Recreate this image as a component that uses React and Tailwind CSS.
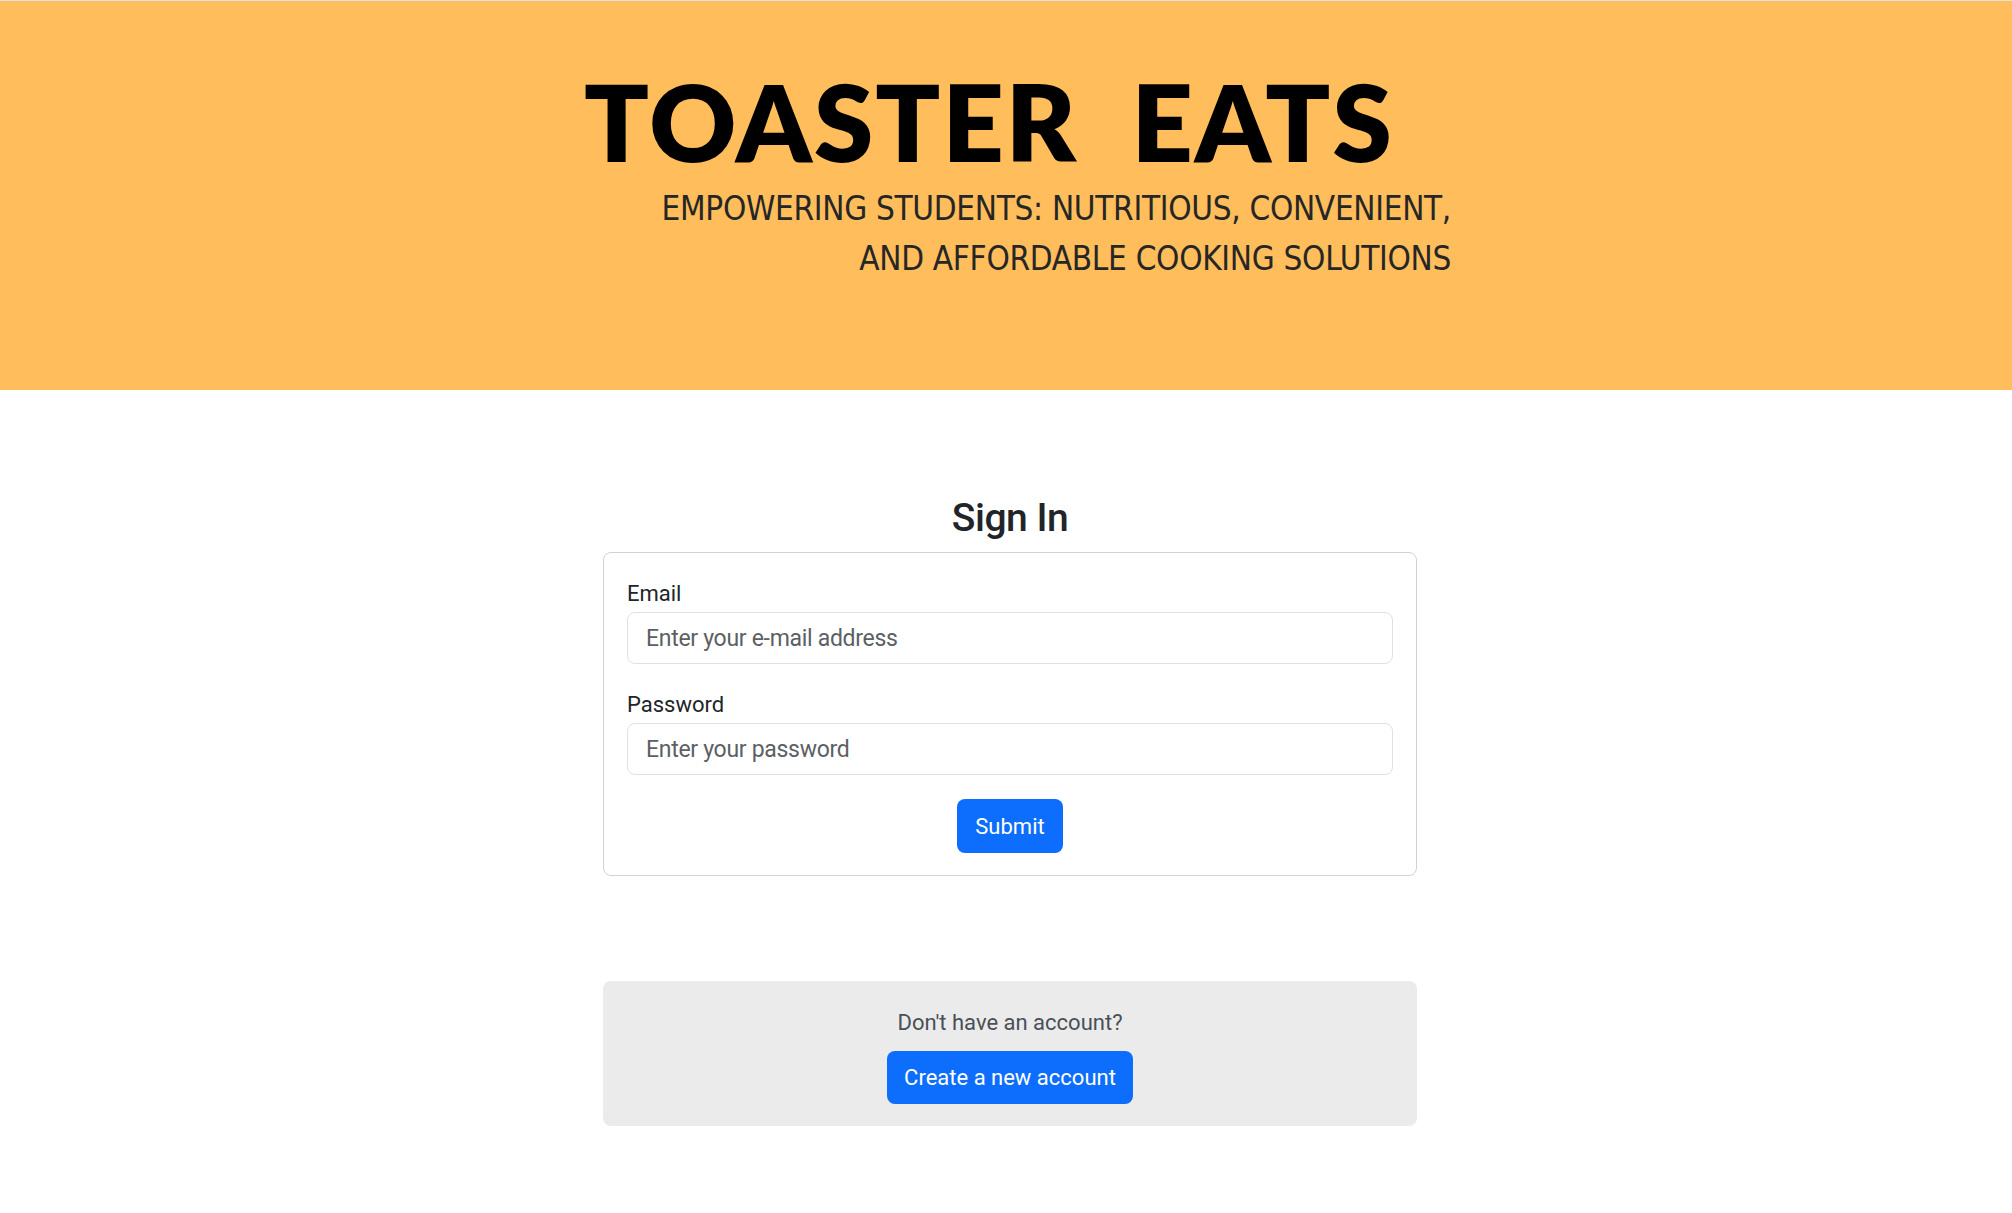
import { useState } from 'react';

const bodyFont = { fontFamily: 'Roboto, "Noto Sans", sans-serif' };

function Header() {
  return (
    <header className="border-t border-[#e2e2e2] bg-[#ffbd5b] h-[390px] pt-[66px]">
      <div className="mx-auto w-[890px]">
        <h1 className="pl-[23px] font-['Lato',sans-serif] font-extrabold text-[107px] leading-[107px] tracking-[2px] text-black whitespace-pre">
          TOASTER  EATS
        </h1>
        <p className="mt-[10px] text-right font-['Liberation_Sans_Narrow','DejaVu_Sans_Condensed',Roboto,sans-serif] text-[33px] leading-[50px] tracking-[-0.3px] text-[#262626] uppercase">
          Empowering students: nutritious, convenient,
          <br />
          and affordable cooking solutions
        </p>
      </div>
    </header>
  );
}

function Field({ label, type, placeholder, value, onChange }) {
  return (
    <div className="flex flex-col">
      <label className="text-[22px] leading-[36px] text-[#212529]">{label}</label>
      <input
        type={type}
        placeholder={placeholder}
        value={value}
        onChange={(e) => onChange(e.target.value)}
        className="h-[52px] w-full rounded-[8px] border border-[#dee2e6] bg-white px-[18px] text-[23px] tracking-[-0.3px] text-[#212529] placeholder:text-[#5c5f63] focus:outline-none"
      />
    </div>
  );
}

export default function App() {
  const [email, setEmail] = useState('');
  const [password, setPassword] = useState('');

  return (
    <div className="min-h-screen bg-white" style={bodyFont}>
      <Header />
      <main className="flex flex-col items-center pl-[8px] pt-[105px] pb-[60px]">
        <h2 className="text-[39px] leading-[47px] font-medium tracking-[-0.5px] text-[#212529] mb-[10px]">
          Sign In
        </h2>
        <form
          onSubmit={(e) => e.preventDefault()}
          className="w-[814px] rounded-[8px] border border-[#d2d2d2] px-[23px] pt-[23px] pb-[22px] flex flex-col"
        >
          <Field
            label="Email"
            type="email"
            placeholder="Enter your e-mail address"
            value={email}
            onChange={setEmail}
          />
          <div className="mt-[23px]">
            <Field
              label="Password"
              type="password"
              placeholder="Enter your password"
              value={password}
              onChange={setPassword}
            />
          </div>
          <div className="mt-[24px] flex justify-center">
            <button
              type="submit"
              className="h-[54px] rounded-[8px] bg-[#0d6efd] px-[18px] text-[22px] text-white"
            >
              Submit
            </button>
          </div>
        </form>

        <div className="mt-[105px] w-[814px] rounded-[8px] bg-[#ebebeb] pt-[24px] pb-[22px] flex flex-col items-center">
          <p className="text-[22px] leading-[36px] text-[#495057]">Don't have an account?</p>
          <button className="mt-[10px] h-[53px] rounded-[8px] bg-[#0d6efd] px-[17px] text-[22px] text-white">
            Create a new account
          </button>
        </div>
      </main>
    </div>
  );
}
